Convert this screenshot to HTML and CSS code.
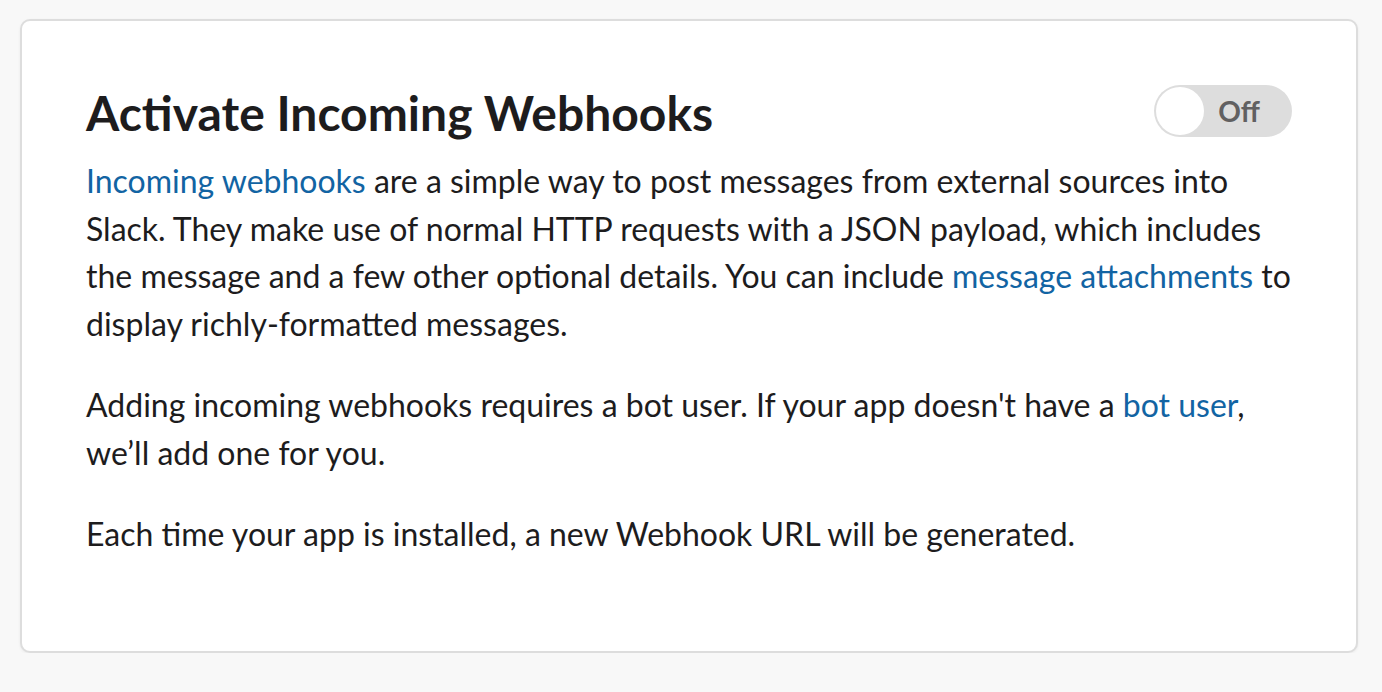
FILE: index.html
```html
<!DOCTYPE html>
<html lang="en">
<head>
<meta charset="utf-8">
<title>Incoming Webhooks</title>
<link rel="stylesheet" href="styles.css">
</head>
<body>
<div class="page">
  <section class="card">
    <div class="header">
      <h2 class="title">Activate Incoming Webhooks</h2>
      <button class="toggle" type="button">
        <span class="knob"></span>
        <span class="toggle-label">Off</span>
      </button>
    </div>
    <p class="para"><a href="#" class="link">Incoming webhooks</a> are a simple way to post messages from external sources into Slack. They make use of normal HTTP requests with a JSON payload, which includes the message and a few other optional details. You can include <a href="#" class="link">message attachments</a> to display richly-formatted messages.</p>
    <p class="para">Adding incoming webhooks requires a bot user. If your app doesn't have a <a href="#" class="link">bot user</a>, we’ll add one for you.</p>
    <p class="para">Each time your app is installed, a new Webhook URL will be generated.</p>
  </section>
</div>
</body>
</html>
```
FILE: styles.css
```css
html, body {
  margin: 0;
  padding: 0;
  background: #f8f8f8;
}
body {
  font-family: Lato, "Noto Sans", sans-serif;
  color: #1d1c1d;
}
.page {
  padding: 19px 24px 0 20px;
}
.card {
  background: #fff;
  border: 2px solid #dddddd;
  border-radius: 10px;
  box-shadow: 0 1px 3px rgba(0,0,0,0.06);
  height: 634px;
  box-sizing: border-box;
  padding: 62px 64px 0 64px;
}
.header {
  display: flex;
  justify-content: space-between;
  align-items: flex-start;
}
.title {
  margin: 0;
  font-size: 48px;
  font-weight: 700;
  line-height: 60px;
}
.toggle {
  display: flex;
  align-items: center;
  width: 138px;
  height: 52px;
  margin-top: 2px;
  padding: 0 2px;
  border: none;
  border-radius: 26px;
  background: #dddddd;
  cursor: pointer;
  font-family: inherit;
}
.knob {
  width: 48px;
  height: 48px;
  border-radius: 50%;
  background: #fff;
  flex: none;
}
.toggle-label {
  flex: 1;
  text-align: center;
  padding-right: 16px;
  font-size: 28px;
  font-weight: 700;
  color: #616061;
}
.para {
  margin: 0 0 34px;
  font-size: 32px;
  line-height: 47.5px;
}
.header + .para {
  margin-top: 14px;
}
.link {
  color: #1264a3;
  text-decoration: none;
}
```
